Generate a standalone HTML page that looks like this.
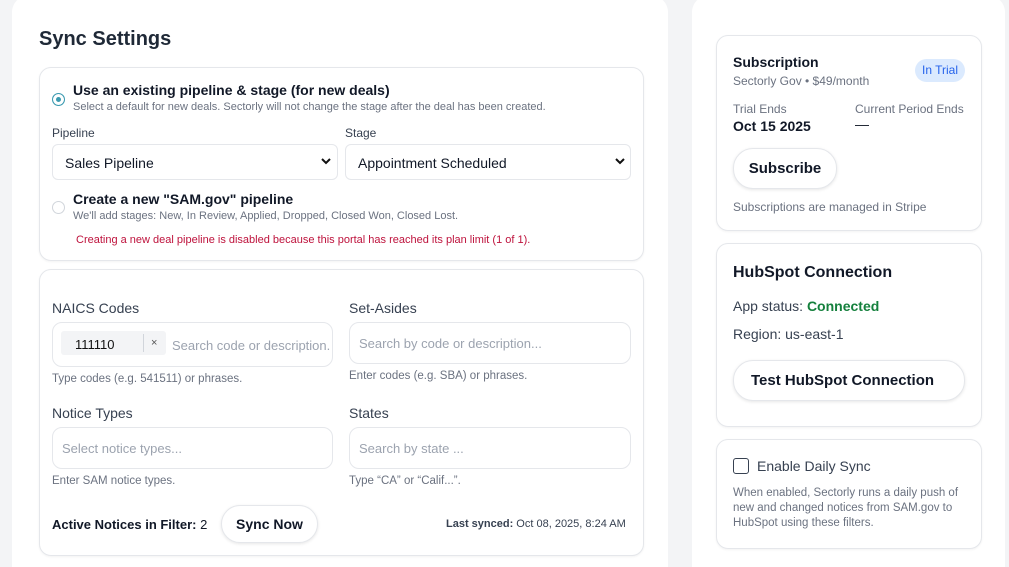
<!DOCTYPE html>
<html style="width:1009px;height:567px;overflow:hidden"><head><meta charset="utf-8"><style>
*{box-sizing:border-box;margin:0;padding:0}
body{width:1009px;height:567px;overflow:hidden;background:#f3f4f6;font-family:"Liberation Sans",sans-serif;color:#111827;position:relative}
.abs{position:absolute}
.panel{position:absolute;background:#fff;border-radius:16px}
.card{position:absolute;background:#fff;border:1px solid #e5e7eb;border-radius:12px;box-shadow:0 1px 2px rgba(0,0,0,.05)}
.t{position:absolute;white-space:nowrap}
.sel{position:absolute;border:1px solid #e5e7eb;border-radius:6px;background:#fff;height:36px;font-size:14px;padding:10px 12px}
.inp{position:absolute;border:1px solid #e5e7eb;border-radius:10px;background:#fff;height:42px;font-size:13px;color:#9ca3af;padding:13px 9px}
.btn{position:absolute;border:1px solid #e5e7eb;border-radius:20px;background:#fff;box-shadow:0 1px 3px rgba(0,0,0,.1);font-weight:bold;font-size:15px;text-align:center}
.small{font-size:11.5px;color:#6b7280}
</style></head><body>
<div class="panel" style="left:12px;top:-4px;width:656px;height:590px"></div>
<div class="panel" style="left:692px;top:-4px;width:313px;height:590px"></div>

<div class="t" style="left:39px;top:28px;font-size:20px;font-weight:bold;color:#1f2937">Sync Settings</div>

<div class="card" style="left:39px;top:67px;width:605px;height:194px"></div>
<div class="abs" style="left:52px;top:93px;width:13px;height:13px;border-radius:50%;background:#3b9ab0;box-shadow:inset 0 0 0 3px #fff;border:1px solid #3b9ab0"></div>
<div class="t" style="left:73px;top:82px;font-size:14px;font-weight:bold">Use an existing pipeline &amp; stage (for new deals)</div>
<div class="t small" style="left:73px;top:101px;font-size:11px">Select a default for new deals. Sectorly will not change the stage after the deal has been created.</div>
<div class="t" style="left:52px;top:126px;font-size:12px;color:#374151">Pipeline</div>
<div class="t" style="left:345px;top:126px;font-size:12px;color:#374151">Stage</div>
<div class="sel" style="left:52px;top:144px;width:286px">Sales Pipeline</div>
<div class="sel" style="left:345px;top:144px;width:286px">Appointment Scheduled</div>
<svg class="abs" style="left:320px;top:157px" width="12" height="9"><path d="M2 2l4 4 4-4" stroke="#111" stroke-width="2" fill="none"/></svg>
<svg class="abs" style="left:614px;top:157px" width="12" height="9"><path d="M2 2l4 4 4-4" stroke="#111" stroke-width="2" fill="none"/></svg>
<div class="abs" style="left:52px;top:201px;width:13px;height:13px;border-radius:50%;border:1px solid #d1d5db"></div>
<div class="t" style="left:73px;top:191px;font-size:14px;font-weight:bold">Create a new "SAM.gov" pipeline</div>
<div class="t small" style="left:73px;top:210px;font-size:11px">We'll add stages: New, In Review, Applied, Dropped, Closed Won, Closed Lost.</div>
<div class="t" style="left:76px;top:234px;font-size:11px;color:#be123c">Creating a new deal pipeline is disabled because this portal has reached its plan limit (1 of 1).</div>

<div class="card" style="left:39px;top:269px;width:605px;height:287px"></div>
<div class="t" style="left:52px;top:300px;font-size:14px;color:#374151">NAICS Codes</div>
<div class="t" style="left:349px;top:300px;font-size:14px;color:#374151">Set-Asides</div>
<div class="inp" style="left:52px;top:322px;width:281px;height:45px;padding:0"></div>
<div class="abs" style="left:61px;top:331px;width:105px;height:24px;background:#f3f4f6;border-radius:3px"></div>
<div class="abs" style="left:143px;top:334px;width:1px;height:18px;background:#d1d5db"></div>
<div class="t" style="left:75px;top:337px;font-size:13px;color:#111">111110</div>
<div class="t" style="left:151px;top:337px;font-size:11px;color:#555">×</div>
<div class="t" style="left:172px;top:338px;font-size:13px;color:#9ca3af">Search code or description.</div>
<div class="inp" style="left:349px;top:322px;width:282px">Search by code or description...</div>
<div class="t small" style="left:52px;top:373px">Type codes (e.g. 541511) or phrases.</div>
<div class="t small" style="left:349px;top:370px">Enter codes (e.g. SBA) or phrases.</div>
<div class="t" style="left:52px;top:405px;font-size:14px;color:#374151">Notice Types</div>
<div class="t" style="left:349px;top:405px;font-size:14px;color:#374151">States</div>
<div class="inp" style="left:52px;top:427px;width:281px">Select notice types...</div>
<div class="inp" style="left:349px;top:427px;width:282px">Search by state ...</div>
<div class="t small" style="left:52px;top:475px">Enter SAM notice types.</div>
<div class="t small" style="left:349px;top:475px">Type “CA” or “Calif...”.</div>
<div class="t" style="left:52px;top:517px;font-size:13px;font-weight:bold">Active Notices in Filter: <span style="font-weight:normal">2</span></div>
<div class="btn" style="left:221px;top:505px;width:97px;height:38px;line-height:36px;font-size:14px">Sync Now</div>
<div class="t" style="left:446px;top:518px;font-size:11px;color:#374151"><b>Last synced:</b> Oct 08, 2025, 8:24 AM</div>

<div class="card" style="left:716px;top:35px;width:266px;height:196px"></div>
<div class="t" style="left:733px;top:54px;font-size:14px;font-weight:bold">Subscription</div>
<div class="t small" style="left:733px;top:74px;font-size:12px">Sectorly Gov • $49/month</div>
<div class="abs" style="left:915px;top:59px;width:50px;height:23px;border-radius:12px;background:#dbeafe;color:#2563eb;font-size:12px;text-align:center;line-height:23px">In Trial</div>
<div class="t small" style="left:733px;top:102px;font-size:12px">Trial Ends</div>
<div class="t small" style="left:855px;top:102px;font-size:12px">Current Period Ends</div>
<div class="t" style="left:733px;top:118px;font-size:14px;font-weight:bold">Oct 15 2025</div>
<div class="t" style="left:855px;top:116px;font-size:14px">—</div>
<div class="btn" style="left:733px;top:148px;width:104px;height:41px;line-height:39px">Subscribe</div>
<div class="t small" style="left:733px;top:200px;font-size:12px">Subscriptions are managed in Stripe</div>

<div class="card" style="left:716px;top:243px;width:266px;height:184px"></div>
<div class="t" style="left:733px;top:264px;font-size:16px;font-weight:bold">HubSpot Connection</div>
<div class="t" style="left:733px;top:298px;font-size:14px;color:#374151">App status: <b style="color:#15803d">Connected</b></div>
<div class="t" style="left:733px;top:326px;font-size:14px;color:#374151">Region: us-east-1</div>
<div class="btn" style="left:733px;top:360px;width:232px;height:41px;line-height:39px;text-align:left;padding-left:17px">Test HubSpot Connection</div>

<div class="card" style="left:716px;top:439px;width:266px;height:110px"></div>
<div class="abs" style="left:733px;top:458px;width:16px;height:16px;border:1.5px solid #374151;border-radius:3px"></div>
<div class="t" style="left:757px;top:458px;font-size:14px;color:#374151">Enable Daily Sync</div>
<div class="abs small" style="left:733px;top:486px;width:236px;font-size:11.5px;line-height:15px">When enabled, Sectorly runs a daily push of new and changed notices from SAM.gov to HubSpot using these filters.</div>
</body></html>
